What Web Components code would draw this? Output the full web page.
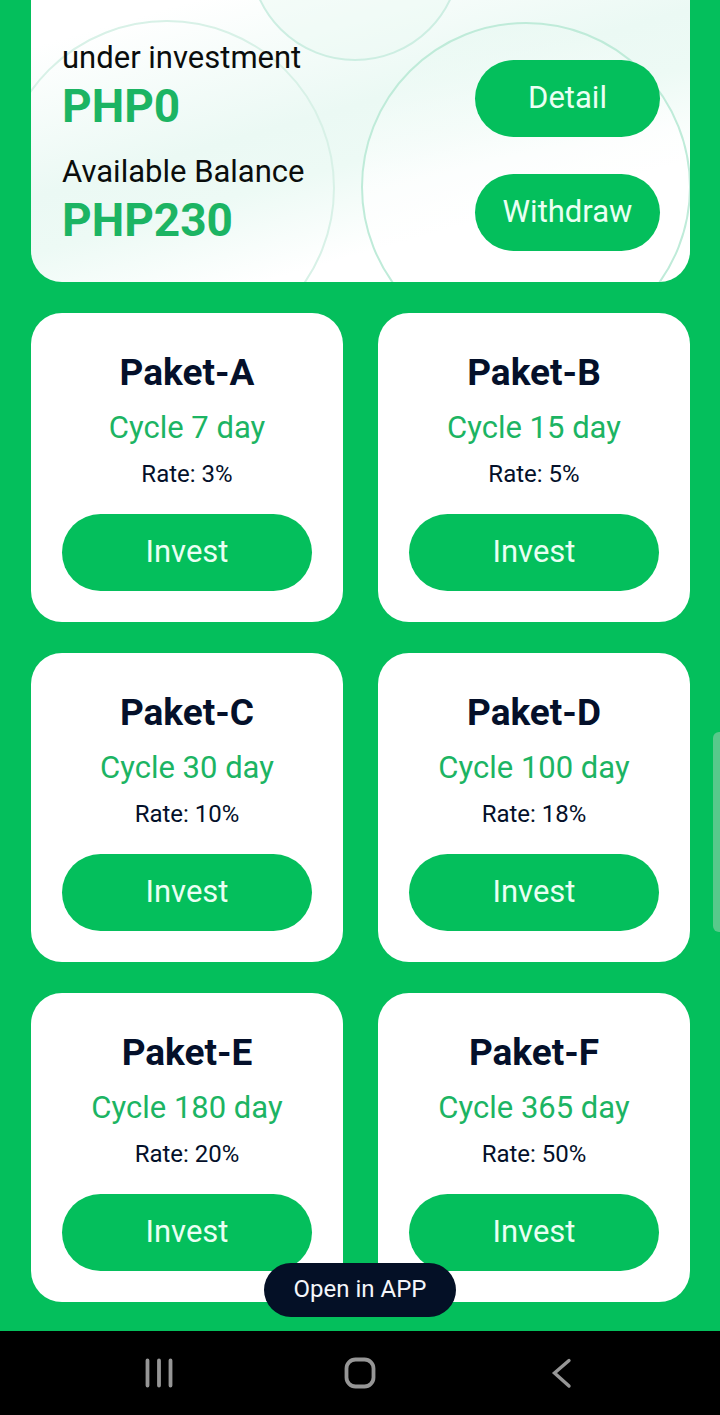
<!DOCTYPE html>
<html lang="en">
<head>
<meta charset="utf-8">
<meta name="viewport" content="width=device-width, initial-scale=1">
<title>Invest</title>
<style>
    :root {
        --green: #04bf5c;
        --green-text: #1cb463;
        --navy: #04102a;
    }

    body {
        margin: 0;
        font-family: Roboto, "Noto Sans", sans-serif;
        background: var(--green);
    }
</style>
</head>
<body>
<invest-app>
    <balance-card>
        <balance-row label="under investment" value="PHP0" action="Detail"></balance-row>
        <balance-row label="Available Balance" value="PHP230" action="Withdraw"></balance-row>
    </balance-card>
    <package-grid>
        <package-card name="Paket-A" days="7" rate="3"></package-card>
        <package-card name="Paket-B" days="15" rate="5"></package-card>
        <package-card name="Paket-C" days="30" rate="10"></package-card>
        <package-card name="Paket-D" days="100" rate="18"></package-card>
        <package-card name="Paket-E" days="180" rate="20"></package-card>
        <package-card name="Paket-F" days="365" rate="50"></package-card>
    </package-grid>
    <open-app slot="overlay">Open in APP</open-app>
    <system-nav slot="nav"></system-nav>
</invest-app>

<script>
// Attaches an open shadow root filled with the given markup
function render(el, html) {
    if (!el.shadowRoot) {
        el.attachShadow({ mode: 'open' });
    }
    el.shadowRoot.innerHTML = html;
}

class InvestApp extends HTMLElement {
    connectedCallback() {
        render(this, `
            <style>
                :host {
                    display: flex;
                    flex-direction: column;
                    min-height: 100vh;
                }

                main {
                    position: relative;
                    flex: 1;
                    display: flex;
                    flex-direction: column;
                    gap: 31px;
                    padding: 0 30px 29px 31px;
                }

                .thumb {
                    position: absolute;
                    right: 0;
                    top: 55%;
                    width: 7px;
                    height: 15%;
                    border-radius: 6px 0 0 6px;
                    background: #58c98b;
                }
            </style>
            <main>
                <slot></slot>
                <div class="thumb"></div>
                <slot name="overlay"></slot>
            </main>
            <slot name="nav"></slot>
        `);
    }
}

class BalanceCard extends HTMLElement {
    connectedCallback() {
        render(this, `
            <style>
                :host {
                    position: relative;
                    display: flex;
                    flex-direction: column;
                    gap: 18px;
                    padding: 41px 30px 31px 31px;
                    border-radius: 0 0 31px 31px;
                    overflow: hidden;
                    background: linear-gradient(164deg, #fff 10%, #ebf9f4 42%, #edfaf5 54%, #fff 74%);
                }

                svg {
                    position: absolute;
                    inset: 0;
                    width: 100%;
                    height: 100%;
                }
            </style>
            <svg viewBox="0 0 659 282" preserveAspectRatio="xMidYMid slice" fill="none" stroke-width="2" aria-hidden="true">
                <defs>
                    <linearGradient id="fade" x1="0.2" y1="0" x2="0.4" y2="1">
                        <stop offset="0" stop-color="#e6f8f1" stop-opacity="0.6"/>
                        <stop offset="0.45" stop-color="#fff" stop-opacity="0.7"/>
                    </linearGradient>
                </defs>
                <circle cx="136" cy="188" r="167" stroke="#d8f1e7"/>
                <circle cx="324" cy="-45" r="105" fill="#ebf9f4" fill-opacity="0.5" stroke="#cdeee2"/>
                <circle cx="495" cy="187" r="164" fill="url(#fade)" stroke="#bfebd9"/>
            </svg>
            <slot></slot>
        `);
    }
}

class BalanceRow extends HTMLElement {
    connectedCallback() {
        render(this, `
            <style>
                :host {
                    position: relative;
                    display: flex;
                    justify-content: space-between;
                    align-items: flex-end;
                }

                p {
                    margin: 0;
                }

                .label {
                    font-size: 31px;
                    line-height: 34px;
                    color: #0a0d0c;
                }

                .value {
                    font-size: 46px;
                    line-height: 62px;
                    font-weight: 700;
                    color: var(--green-text);
                }

                pill-button {
                    width: 185px;
                }
            </style>
            <div>
                <p class="label">${this.getAttribute('label')}</p>
                <p class="value">${this.getAttribute('value')}</p>
            </div>
            <pill-button>${this.getAttribute('action')}</pill-button>
        `);
    }
}

class PillButton extends HTMLElement {
    connectedCallback() {
        render(this, `
            <style>
                :host {
                    display: block;
                }

                button {
                    width: 100%;
                    height: 77px;
                    padding: 0 0 2px;
                    border: 0;
                    border-radius: 39px;
                    background: var(--green);
                    color: #e9fff3;
                    font: inherit;
                    font-size: 31px;
                    cursor: pointer;
                }
            </style>
            <button type="button"><slot></slot></button>
        `);
    }
}

class PackageGrid extends HTMLElement {
    connectedCallback() {
        render(this, `
            <style>
                :host {
                    display: grid;
                    grid-template-columns: 1fr 1fr;
                    gap: 31px 35px;
                }
            </style>
            <slot></slot>
        `);
    }
}

class PackageCard extends HTMLElement {
    connectedCallback() {
        render(this, `
            <style>
                :host {
                    display: block;
                    padding: 31px;
                    border-radius: 31px;
                    background: #fff;
                    color: var(--navy);
                    text-align: center;
                }

                h2, p {
                    margin: 0;
                }

                h2 {
                    font-size: 37px;
                    line-height: 58px;
                    font-weight: 700;
                }

                .cycle {
                    font-size: 31px;
                    line-height: 52px;
                    color: var(--green-text);
                }

                .rate {
                    margin-bottom: 20px;
                    font-size: 24px;
                    line-height: 40px;
                }
            </style>
            <h2>${this.getAttribute('name')}</h2>
            <p class="cycle">Cycle ${this.getAttribute('days')} day</p>
            <p class="rate">Rate: ${this.getAttribute('rate')}%</p>
            <pill-button>Invest</pill-button>
        `);
    }
}

class OpenApp extends HTMLElement {
    connectedCallback() {
        render(this, `
            <style>
                :host {
                    position: absolute;
                    left: 0;
                    right: 0;
                    bottom: 14px;
                    display: flex;
                    justify-content: center;
                }

                button {
                    height: 54px;
                    padding: 0 30px 2px;
                    border: 0;
                    border-radius: 27px;
                    background: #041026;
                    color: #f4f6fa;
                    font: inherit;
                    font-size: 24px;
                    cursor: pointer;
                }
            </style>
            <button type="button"><slot></slot></button>
        `);
    }
}

class SystemNav extends HTMLElement {
    connectedCallback() {
        render(this, `
            <style>
                :host {
                    display: block;
                }

                nav {
                    display: grid;
                    grid-template-columns: repeat(3, 1fr);
                    height: 84px;
                    padding: 0 58px;
                    background: #000;
                }

                button {
                    display: grid;
                    place-items: center;
                    padding: 0;
                    border: 0;
                    background: none;
                    color: #969696;
                    cursor: pointer;
                }

                svg {
                    width: 36px;
                    height: 36px;
                    fill: none;
                    stroke: currentColor;
                    stroke-linecap: round;
                }
            </style>
            <nav aria-label="System">
                <button type="button" aria-label="Recents">
                    <svg viewBox="0 0 36 36" stroke-width="3.8"><path d="M6.500 5.500v25M18 5.500v25M29.500 5.500v25"/></svg>
                </button>
                <button type="button" aria-label="Home">
                    <svg viewBox="0 0 36 36" stroke-width="3.8"><rect x="4.500" y="4.500" width="27" height="27" rx="9"/></svg>
                </button>
                <button type="button" aria-label="Back">
                    <svg viewBox="0 0 36 36" stroke-width="3.4"><path d="M26 5.500 11.500 18 26 31"/></svg>
                </button>
            </nav>
        `);
    }
}

customElements.define('pill-button', PillButton);
customElements.define('balance-row', BalanceRow);
customElements.define('balance-card', BalanceCard);
customElements.define('package-card', PackageCard);
customElements.define('package-grid', PackageGrid);
customElements.define('open-app', OpenApp);
customElements.define('system-nav', SystemNav);
customElements.define('invest-app', InvestApp);
</script>
</body>
</html>
